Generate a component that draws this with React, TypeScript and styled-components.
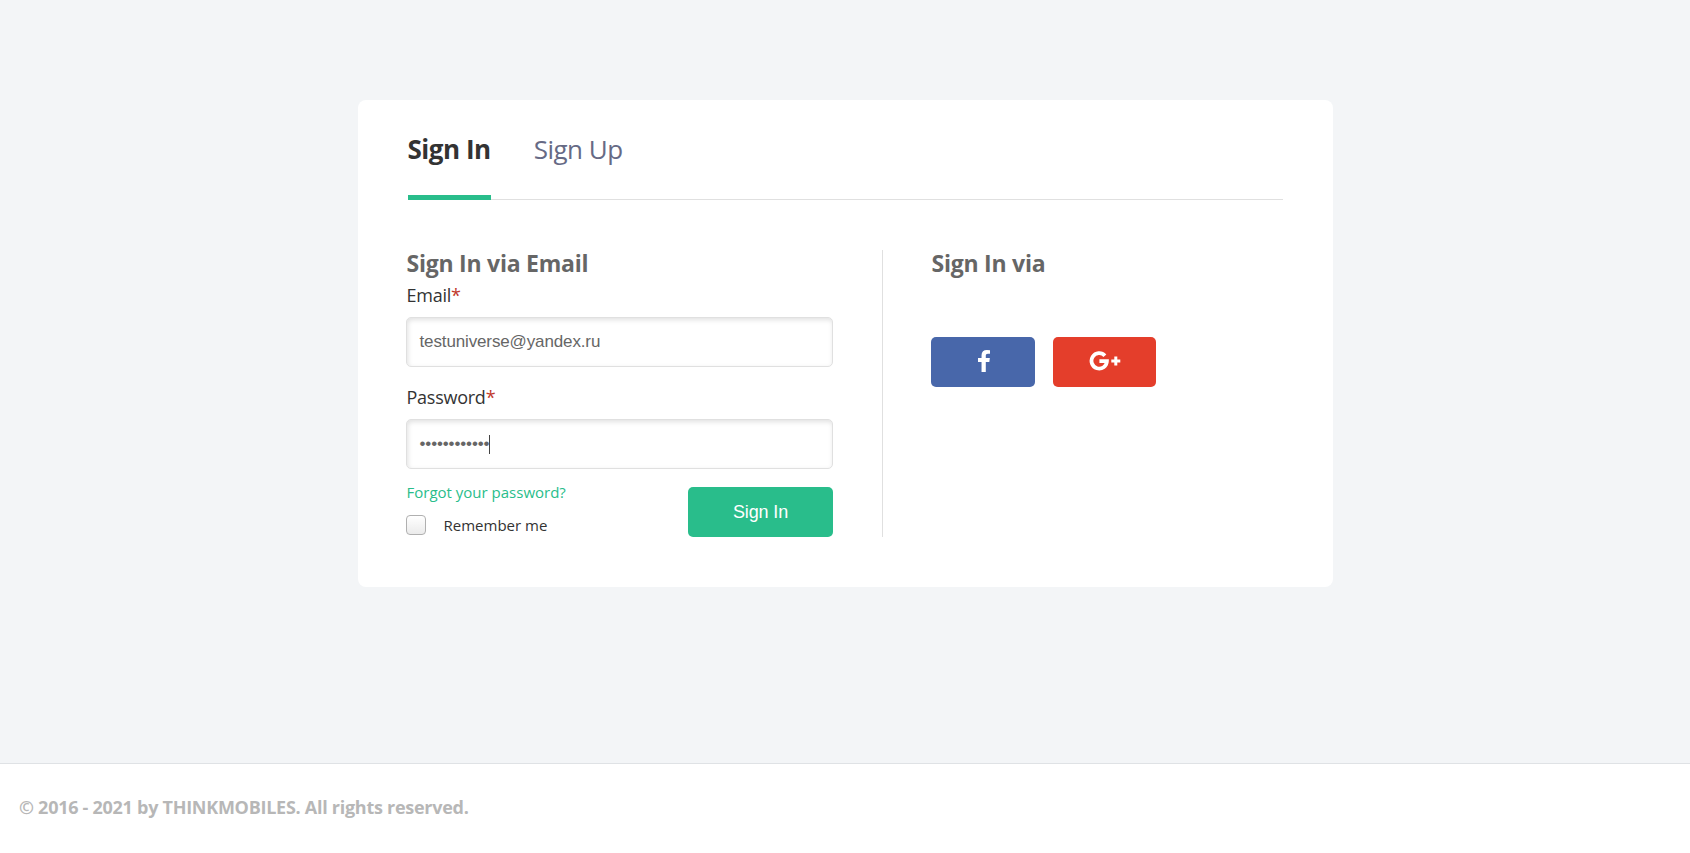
import React from "react";
import styled, { createGlobalStyle } from "styled-components";

const GlobalStyle = createGlobalStyle`
  *, *::before, *::after { box-sizing: border-box; }
  body {
    margin: 0;
    background: #f3f5f7;
    color: #333;
    font-family: "Open Sans", "Noto Sans", sans-serif;
  }
`;

const Page = styled.div`
  display: flex;
  flex-direction: column;
  align-items: center;
  height: 853px;
`;

const Main = styled.main`
  flex: 1;
  padding-top: 100px;
`;

const Card = styled.section`
  width: 975px;
  height: 487px;
  padding: 0 50px;
  background: #fff;
  border-radius: 8px;
`;

const Tabs = styled.nav`
  display: flex;
  gap: 43px;
  height: 100px;
  border-bottom: 1px solid #e0e0e0;
`;

const Tab = styled.a<{ $active?: boolean }>`
  height: 100px;
  padding-top: 31px;
  font-size: 26px;
  line-height: 36px;
  letter-spacing: -0.48px;
  white-space: nowrap;
  font-weight: ${(p) => (p.$active ? 700 : 400)};
  color: ${(p) => (p.$active ? "#333" : "#666a85")};
  border-bottom: ${(p) => (p.$active ? "5px solid #29bd8b" : "0")};
`;

const Columns = styled.div`
  display: flex;
  margin: 50px 0 0 -2px;
  height: 287px;
`;

const Form = styled.form`
  width: 477px;
  padding-right: 49px;
  border-right: 1px solid #e0e0e0;
`;

const Social = styled.div`
  padding-left: 48px;
`;

const Heading = styled.h2`
  margin: 0;
  padding-left: 1px;
  height: 28px;
  font-size: 23px;
  line-height: 26px;
  letter-spacing: -0.24px;
  font-weight: 700;
  color: #666;
`;

const Label = styled.label<{ $space: number }>`
  display: block;
  padding: ${(p) => p.$space}px 0 9px 1px;
  font-size: 18px;
  line-height: 25px;
  letter-spacing: -0.25px;
  color: #333;
`;

const Required = styled.span`
  color: #c0392b;
`;

const Field = styled.div`
  display: flex;
  align-items: center;
  width: 427px;
  height: 50px;
  padding: 0 13px;
  border: 1px solid #e0e0e0;
  border-radius: 5px;
  box-shadow: inset 1px 2px 5px rgba(0, 0, 0, 0.12);
  font-family: "Liberation Sans", Arial, sans-serif;
  font-size: 17px;
  letter-spacing: -0.13px;
  color: #666;
`;

const Bottom = styled.div`
  display: flex;
  justify-content: space-between;
  width: 427px;
  margin-top: 18px;
`;

const Forgot = styled.a`
  display: block;
  margin-top: -6px;
  padding-left: 1px;
  font-size: 15px;
  line-height: 22px;
  color: #29bd8b;
`;

const Remember = styled.label`
  display: flex;
  align-items: center;
  gap: 18px;
  margin-top: 12px;
  height: 20px;
  font-size: 15px;
  color: #333;
`;

const Box = styled.span`
  width: 20px;
  height: 20px;
  border: 1px solid #b0b0b0;
  border-radius: 4px;
  background: linear-gradient(#fff, #ebebeb);
`;

const Submit = styled.button`
  width: 145px;
  height: 50px;
  padding: 0 0 0 1px;
  border: 0;
  border-radius: 5px;
  background: #29bd8b;
  color: #fff;
  font: 18px "Liberation Sans", Arial, sans-serif;
  letter-spacing: -0.15px;
`;

const Buttons = styled.div`
  display: flex;
  gap: 18px;
  margin-top: 59px;
`;

const SocialButton = styled.button<{ $color: string; $width: number }>`
  display: flex;
  align-items: center;
  justify-content: center;
  width: ${(p) => p.$width}px;
  height: 50px;
  padding: 0 0 2px 2px;
  border: 0;
  border-radius: 5px;
  background: ${(p) => p.$color};
`;

const Footer = styled.footer`
  align-self: stretch;
  height: 90px;
  padding: 31px 19px 0;
  background: #fff;
  border-top: 1px solid #dfe2e5;
  font-size: 18px;
  line-height: 25px;
  letter-spacing: -0.27px;
  font-weight: 700;
  color: #b7b7b7;
`;

const Secret = styled.span`
  height: 19px;
  line-height: 17px;
  letter-spacing: -0.13px;
  border-right: 1px solid #444;
`;

export default function App() {
  return (
    <Page>
      <GlobalStyle />
      <Main>
        <Card>
          <Tabs>
            <Tab $active>Sign In</Tab>
            <Tab>Sign Up</Tab>
          </Tabs>
          <Columns>
            <Form>
              <Heading>Sign In via Email</Heading>
              <Label $space={5}>Email<Required>*</Required></Label>
              <Field>testuniverse@yandex.ru</Field>
              <Label $space={18}>Password<Required>*</Required></Label>
              <Field>
                <Secret>••••••••••••</Secret>
              </Field>
              <Bottom>
                <div>
                  <Forgot>Forgot your password?</Forgot>
                  <Remember><Box />Remember me</Remember>
                </div>
                <Submit type="button">Sign In</Submit>
              </Bottom>
            </Form>
            <Social>
              <Heading>Sign In via</Heading>
              <Buttons>
                <SocialButton $color="#4867aa" $width={104} aria-label="Facebook">
                  <svg width="12" height="22" viewBox="95 0 864 1664" preserveAspectRatio="none" fill="#fff">
                    <path transform="translate(0 1536) scale(1 -1)" d="M959 1524v-264h-157q-86 0 -116 -36t-30 -108v-189h293l-39 -296h-254v-759h-306v759h-255v296h255v218q0 186 104 288.5t277 102.5q147 0 228 -12z" />
                  </svg>
                </SocialButton>
                <SocialButton $color="#e43e2b" $width={103} aria-label="Google Plus">
                  <svg width="32" height="20" viewBox="0 0 32 20" fill="none" stroke="#fff">
                    <path strokeWidth="3.8" d="M15.9 4.7A7.7 7.7 0 1 0 17.9 10.2H10.4" />
                    <path strokeWidth="3" d="M22.3 10h9M26.8 5.5v9" />
                  </svg>
                </SocialButton>
              </Buttons>
            </Social>
          </Columns>
        </Card>
      </Main>
      <Footer>© 2016 - 2021 by THINKMOBILES. All rights reserved.</Footer>
    </Page>
  );
}
